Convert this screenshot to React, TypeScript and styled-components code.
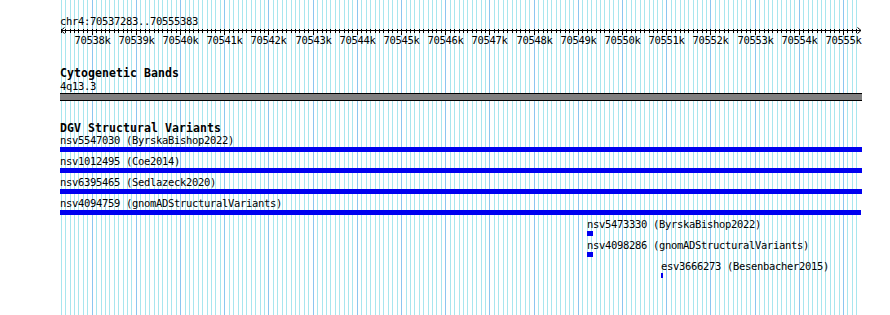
import React from 'react';
import styled, { createGlobalStyle } from 'styled-components';

// view window
const VIEW_START = 70537283;
const VIEW_END = 70555383;
const TRACK_LEFT = 60;
const TRACK_WIDTH = 800;
const SCALE = TRACK_WIDTH / (VIEW_END - VIEW_START);

const toPx = (bp: number) => (bp - VIEW_START) * SCALE;
const clampPx = (px: number) => Math.max(0, Math.min(802, px));

type Feature = {
  name: string;
  source: string;
  start: number;
  end: number;
};

const variants: Feature[] = [
  { name: 'nsv5547030', source: 'ByrskaBishop2022', start: 70530000, end: 70560000 },
  { name: 'nsv1012495', source: 'Coe2014', start: 70530000, end: 70560000 },
  { name: 'nsv6395465', source: 'Sedlazeck2020', start: 70530000, end: 70560000 },
  { name: 'nsv4094759', source: 'gnomADStructuralVariants', start: 70530000, end: 70555400 },
  { name: 'nsv5473330', source: 'ByrskaBishop2022', start: 70549206, end: 70549342 },
  { name: 'nsv4098286', source: 'gnomADStructuralVariants', start: 70549206, end: 70549342 },
  { name: 'esv3666273', source: 'Besenbacher2015', start: 70550880, end: 70550925 },
];

const GlobalStyle = createGlobalStyle`
  html, body {
    margin: 0;
    padding: 0;
    background: #ffffff;
  }
  body {
    font-family: "DejaVu Sans Mono", "Liberation Mono", monospace;
    color: #000;
  }
`;

const GridLines = () => {
  const lines = [];
  const first = Math.ceil(VIEW_START / 100) * 100;
  for (let bp = first; bp <= VIEW_END; bp += 100) {
    const x = Math.round(TRACK_LEFT + toPx(bp)) + 0.5;
    const major = bp % 1000 === 0;
    lines.push(
      <line key={bp} x1={x} x2={x} y1={0} y2={315} stroke={major ? '#8cc6f0' : '#a8e6ee'} strokeWidth={1} />
    );
  }
  return (
    <GridSvg width={890} height={315} shapeRendering="crispEdges">
      {lines}
    </GridSvg>
  );
};

const RulerDrawing = () => {
  const ticks = [];
  const labels = [];
  const first = Math.ceil(VIEW_START / 100) * 100;
  for (let bp = first; bp <= VIEW_END; bp += 100) {
    const x = Math.round(toPx(bp)) + 0.5;
    const major = bp % 1000 === 0;
    ticks.push(<line key={bp} x1={x} x2={x} y1={2} y2={major ? 8 : 6} stroke="#000" />);
    if (major) {
      labels.push(
        <text key={'l' + bp} x={x} y={17} textAnchor="middle">
          {bp / 1000}k
        </text>
      );
    }
  }
  return (
    <RulerSvg width={806} height={20}>
      <g shapeRendering="crispEdges">
        <line x1={1} x2={801} y1={3.5} y2={3.5} stroke="#000" />
        {ticks}
      </g>
      <path d="M4.5 0.5 L1 3.5 L4.5 6.5 M797.5 0.5 L801 3.5 L797.5 6.5" fill="none" stroke="#000" />
      {labels}
    </RulerSvg>
  );
};

const VariantRow = ({ feature }: { feature: Feature }) => {
  const left = clampPx(toPx(feature.start));
  const right = clampPx(toPx(feature.end));
  return (
    <Row style={{ marginLeft: Math.round(left) }}>
      <FeatureLabel>
        {feature.name} ({feature.source})
      </FeatureLabel>
      <VariantBar style={{ width: Math.max(2, Math.round(right - left)) }} />
    </Row>
  );
};

export default function App() {
  return (
    <>
      <GlobalStyle />
      <Panel>
        <GridLines />
        <Content>
          <RulerBlock>
            <FeatureLabel>chr4:70537283..70555383</FeatureLabel>
            <RulerDrawing />
          </RulerBlock>

          <Track $gap={20}>
            <TrackTitle $lh={13}>Cytogenetic Bands</TrackTitle>
            <FeatureLabel>4q13.3</FeatureLabel>
            <BandBar />
          </Track>

          <Track $gap={21}>
            <TrackTitle $lh={12}>DGV Structural Variants</TrackTitle>
            {variants.map((v) => (
              <VariantRow key={v.name} feature={v} />
            ))}
          </Track>
        </Content>
      </Panel>
    </>
  );
}

// Styled Components
const Panel = styled.div`
  position: relative;
  width: 890px;
  height: 315px;
  overflow: hidden;
  background: #fff;
`;

const GridSvg = styled.svg`
  position: absolute;
  left: 0;
  top: 0;
  display: block;
`;

const Content = styled.div`
  position: relative;
  display: flex;
  flex-direction: column;
  padding: 15px 0 0 ${TRACK_LEFT}px;
`;

const RulerBlock = styled.div`
  display: flex;
  flex-direction: column;
`;

const RulerSvg = styled.svg`
  display: block;
  font-family: "DejaVu Sans Mono", "Liberation Mono", monospace;
  font-size: 10.5px;
  letter-spacing: -0.32px;
`;

const Track = styled.section<{ $gap: number }>`
  display: flex;
  flex-direction: column;
  margin-top: ${(p) => p.$gap}px;
`;

const TrackTitle = styled.div<{ $lh: number }>`
  font-size: 11.5px;
  font-weight: bold;
  letter-spacing: 0.08px;
  line-height: ${(p) => p.$lh}px;
  height: ${(p) => p.$lh}px;
  white-space: nowrap;
`;

const FeatureLabel = styled.div`
  font-size: 10.5px;
  letter-spacing: -0.32px;
  line-height: 12px;
  height: 12px;
  white-space: nowrap;
`;

const BandBar = styled.div`
  margin-top: 1px;
  width: 802px;
  height: 6px;
  background: #808080;
  border-top: 1px solid #000;
  border-bottom: 1px solid #000;
`;

const Row = styled.div`
  display: flex;
  flex-direction: column;
  align-items: flex-start;
  margin-bottom: 3px;
`;

const VariantBar = styled.div`
  margin-top: 1px;
  height: 5px;
  background: #0000f0;
`;
